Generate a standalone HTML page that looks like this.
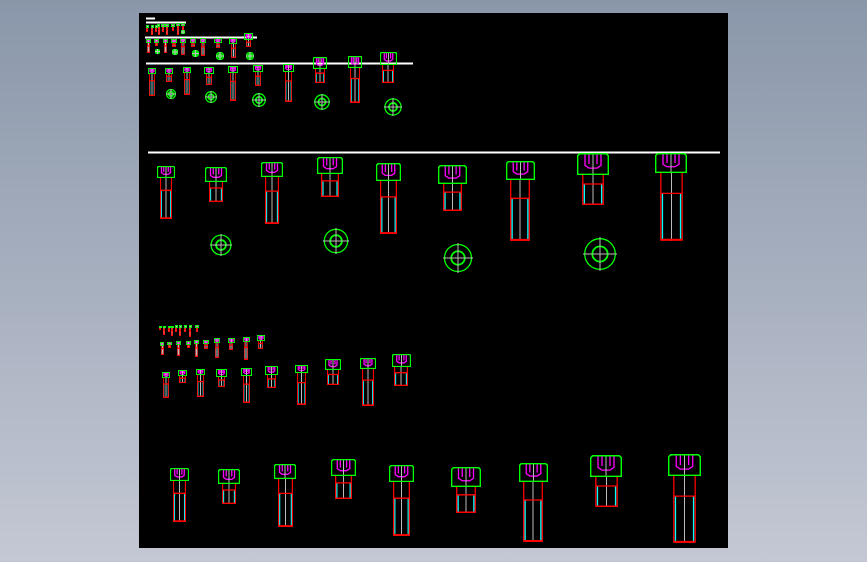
<!DOCTYPE html>
<html><head><meta charset="utf-8"><style>
html,body{margin:0;padding:0;width:867px;height:562px;overflow:hidden;background:linear-gradient(#8a97aa,#c4c8d4);}
svg{position:absolute;left:0;top:0}
</style></head><body>
<svg width="867" height="562" viewBox="0 0 867 562" xmlns="http://www.w3.org/2000/svg">
<defs>
<symbol id="h" viewBox="0 0 24 16" preserveAspectRatio="none">
<path d="M6,0V9L9,11H15L18,9V0M9,0V8M15,0V8" fill="none" stroke="#f0f" stroke-width="1.3" vector-effect="non-scaling-stroke"/>
<path d="M12,0V16" stroke="#bbb" stroke-width="1" vector-effect="non-scaling-stroke"/>
<path d="M0.5,15.5V2L2,0.5H22L23.5,2V15.5Z" fill="none" stroke="#0f0" stroke-width="1.5" vector-effect="non-scaling-stroke"/>
</symbol>
<symbol id="s" viewBox="0 0 14 40" preserveAspectRatio="none">
<path d="M1.5,12V39.5M12.5,12V39.5" stroke="#0ff" stroke-width="1.3" vector-effect="non-scaling-stroke"/>
<path d="M7,0V40" stroke="#bbb" stroke-width="1" vector-effect="non-scaling-stroke"/>
<path d="M0.5,0V39.5H13.5V0M0.5,12H13.5" fill="none" stroke="#f00" stroke-width="1.3" vector-effect="non-scaling-stroke"/>
<path d="M1,39.3H13" stroke="#f00" stroke-width="2" vector-effect="non-scaling-stroke"/>
</symbol>
<symbol id="c" viewBox="-10 -10 20 20">
<circle r="9" fill="none" stroke="#0f0" stroke-width="1.3" vector-effect="non-scaling-stroke"/>
<circle r="4.5" fill="none" stroke="#0f0" stroke-width="1.8" vector-effect="non-scaling-stroke"/>
<path d="M-10,0H10M0,-10V10" stroke="#bbb" stroke-width="1" vector-effect="non-scaling-stroke"/>
</symbol>
</defs>
<rect x="139" y="13" width="589" height="535" fill="#000"/>
<g stroke="#fff" stroke-width="1.6" shape-rendering="crispEdges">
<path d="M146,18.5H155M146,22.5H186M145,37.5H257M146,63.5H413M148,152.5H720"/>
</g>
<use href="#h" x="157" y="166" width="18" height="12"/><use href="#s" x="160" y="178" width="12" height="41"/>
<use href="#h" x="205" y="167" width="22" height="15"/><use href="#s" x="209" y="182" width="14" height="20"/>
<use href="#h" x="261" y="162" width="22" height="15"/><use href="#s" x="265" y="177" width="14" height="47"/>
<use href="#h" x="317" y="157" width="26" height="17"/><use href="#s" x="321" y="174" width="18" height="23"/>
<use href="#h" x="376" y="163" width="25" height="18"/><use href="#s" x="380" y="181" width="17" height="53"/>
<use href="#h" x="438" y="165" width="29" height="19"/><use href="#s" x="443" y="184" width="19" height="27"/>
<use href="#h" x="506" y="161" width="29" height="19"/><use href="#s" x="510" y="180" width="20" height="61"/>
<use href="#h" x="577" y="153" width="32" height="22"/><use href="#s" x="582" y="175" width="22" height="30"/>
<use href="#h" x="655" y="153" width="32" height="20"/><use href="#s" x="660" y="173" width="23" height="68"/>
<use href="#c" x="210" y="234" width="22" height="22"/>
<use href="#c" x="323" y="228" width="26" height="26"/>
<use href="#c" x="443" y="243" width="30" height="30"/>
<use href="#c" x="583" y="237" width="34" height="34"/>
<use href="#h" x="148" y="68" width="8" height="6"/><use href="#s" x="149" y="74" width="6" height="22"/>
<use href="#h" x="165" y="68" width="8" height="6"/><use href="#s" x="166" y="74" width="6" height="8"/>
<use href="#h" x="183" y="67" width="8" height="6"/><use href="#s" x="184" y="73" width="6" height="22"/>
<use href="#h" x="204" y="67" width="10" height="7"/><use href="#s" x="206" y="74" width="6" height="11"/>
<use href="#h" x="228" y="66" width="10" height="7"/><use href="#s" x="230" y="73" width="6" height="28"/>
<use href="#h" x="253" y="65" width="10" height="7"/><use href="#s" x="255" y="72" width="6" height="14"/>
<use href="#h" x="283" y="64" width="11" height="8"/><use href="#s" x="285" y="72" width="7" height="30"/>
<use href="#h" x="313" y="57" width="14" height="12"/><use href="#s" x="315" y="69" width="10" height="14"/>
<use href="#h" x="348" y="56" width="14" height="12"/><use href="#s" x="350" y="68" width="10" height="35"/>
<use href="#h" x="380" y="52" width="17" height="13"/><use href="#s" x="382" y="65" width="12" height="18"/>
<use href="#c" x="166" y="89" width="10" height="10"/>
<use href="#c" x="205" y="91" width="12" height="12"/>
<use href="#c" x="252" y="93" width="14" height="14"/>
<use href="#c" x="314" y="94" width="16" height="16"/>
<use href="#c" x="384" y="98" width="18" height="18"/>
<use href="#h" x="146" y="39" width="5" height="4"/><use href="#s" x="147" y="43" width="3" height="10"/>
<use href="#h" x="154" y="39" width="5" height="4"/><use href="#s" x="155" y="43" width="3" height="3"/>
<use href="#h" x="163" y="39" width="5" height="4"/><use href="#s" x="164" y="43" width="3" height="10"/>
<use href="#h" x="171" y="39" width="6" height="4"/><use href="#s" x="172" y="43" width="4" height="4"/>
<use href="#h" x="180" y="38" width="6" height="5"/><use href="#s" x="181" y="43" width="4" height="12"/>
<use href="#h" x="190" y="38" width="6" height="5"/><use href="#s" x="191" y="43" width="4" height="4"/>
<use href="#h" x="200" y="38" width="6" height="5"/><use href="#s" x="201" y="43" width="4" height="13"/>
<use href="#h" x="214" y="38" width="8" height="5"/><use href="#s" x="216" y="43" width="4" height="5"/>
<use href="#h" x="229" y="38" width="8" height="6"/><use href="#s" x="231" y="44" width="5" height="14"/>
<use href="#h" x="244" y="33" width="9" height="7"/><use href="#s" x="246" y="40" width="5" height="7"/>
<use href="#c" x="155" y="49" width="5" height="5"/>
<use href="#c" x="172" y="49" width="6" height="6"/>
<use href="#c" x="192" y="50" width="7" height="7"/>
<use href="#c" x="216" y="52" width="8" height="8"/>
<use href="#c" x="246" y="52" width="8" height="8"/>
<use href="#h" x="146" y="25" width="3" height="3"/><use href="#s" x="146" y="28" width="2" height="4"/>
<use href="#h" x="151" y="25" width="3" height="3"/><use href="#s" x="151" y="28" width="2" height="7"/>
<use href="#h" x="155" y="25" width="3" height="3"/><use href="#s" x="155" y="28" width="2" height="4"/>
<use href="#h" x="157" y="24" width="3" height="3"/><use href="#s" x="158" y="27" width="2" height="8"/>
<use href="#h" x="161" y="24" width="4" height="3"/><use href="#s" x="162" y="27" width="2" height="5"/>
<use href="#h" x="165" y="24" width="4" height="3"/><use href="#s" x="166" y="27" width="2" height="8"/>
<use href="#h" x="171" y="24" width="4" height="3"/><use href="#s" x="172" y="27" width="2" height="4"/>
<use href="#h" x="176" y="23" width="4" height="3"/><use href="#s" x="177" y="26" width="2" height="9"/>
<use href="#h" x="181" y="23" width="4" height="3"/><use href="#s" x="182" y="26" width="2" height="4"/>
<use href="#c" x="181" y="30" width="4" height="4"/>
<use href="#h" x="159" y="326" width="3" height="2"/><use href="#s" x="159" y="328" width="2" height="2"/>
<use href="#h" x="163" y="326" width="3" height="2"/><use href="#s" x="163" y="328" width="2" height="7"/>
<use href="#h" x="168" y="326" width="3" height="2"/><use href="#s" x="168" y="328" width="2" height="4"/>
<use href="#h" x="171" y="326" width="3" height="2"/><use href="#s" x="171" y="328" width="2" height="8"/>
<use href="#h" x="175" y="325" width="3" height="3"/><use href="#s" x="175" y="328" width="2" height="4"/>
<use href="#h" x="179" y="325" width="3" height="3"/><use href="#s" x="179" y="328" width="2" height="8"/>
<use href="#h" x="184" y="325" width="3" height="3"/><use href="#s" x="184" y="328" width="2" height="4"/>
<use href="#h" x="189" y="325" width="3" height="3"/><use href="#s" x="189" y="328" width="2" height="9"/>
<use href="#h" x="195" y="325" width="4" height="3"/><use href="#s" x="196" y="328" width="2" height="4"/>
<use href="#h" x="160" y="342" width="4" height="4"/><use href="#s" x="161" y="346" width="3" height="9"/>
<use href="#h" x="167" y="342" width="5" height="3"/><use href="#s" x="168" y="345" width="3" height="3"/>
<use href="#h" x="176" y="341" width="5" height="4"/><use href="#s" x="177" y="345" width="3" height="11"/>
<use href="#h" x="186" y="341" width="5" height="4"/><use href="#s" x="187" y="345" width="3" height="3"/>
<use href="#h" x="194" y="340" width="5" height="4"/><use href="#s" x="195" y="344" width="3" height="13"/>
<use href="#h" x="203" y="340" width="6" height="4"/><use href="#s" x="204" y="344" width="4" height="5"/>
<use href="#h" x="214" y="338" width="6" height="5"/><use href="#s" x="215" y="343" width="4" height="15"/>
<use href="#h" x="228" y="338" width="7" height="5"/><use href="#s" x="229" y="343" width="4" height="7"/>
<use href="#h" x="243" y="337" width="7" height="5"/><use href="#s" x="244" y="342" width="4" height="18"/>
<use href="#h" x="257" y="335" width="8" height="6"/><use href="#s" x="258" y="341" width="5" height="8"/>
<use href="#h" x="162" y="372" width="8" height="6"/><use href="#s" x="163" y="378" width="6" height="20"/>
<use href="#h" x="178" y="370" width="9" height="6"/><use href="#s" x="179" y="376" width="7" height="7"/>
<use href="#h" x="196" y="369" width="9" height="6"/><use href="#s" x="197" y="375" width="7" height="22"/>
<use href="#h" x="216" y="369" width="11" height="8"/><use href="#s" x="218" y="377" width="7" height="10"/>
<use href="#h" x="241" y="368" width="11" height="8"/><use href="#s" x="243" y="376" width="7" height="27"/>
<use href="#h" x="265" y="366" width="13" height="9"/><use href="#s" x="267" y="375" width="9" height="13"/>
<use href="#h" x="295" y="365" width="13" height="8"/><use href="#s" x="297" y="373" width="9" height="32"/>
<use href="#h" x="325" y="359" width="16" height="11"/><use href="#s" x="327" y="370" width="12" height="15"/>
<use href="#h" x="360" y="358" width="16" height="11"/><use href="#s" x="362" y="369" width="12" height="37"/>
<use href="#h" x="392" y="354" width="19" height="13"/><use href="#s" x="394" y="367" width="14" height="19"/>
<use href="#h" x="170" y="468" width="19" height="13"/><use href="#s" x="173" y="481" width="13" height="41"/>
<use href="#h" x="218" y="469" width="22" height="15"/><use href="#s" x="222" y="484" width="14" height="20"/>
<use href="#h" x="274" y="464" width="22" height="15"/><use href="#s" x="278" y="479" width="15" height="48"/>
<use href="#h" x="331" y="459" width="25" height="17"/><use href="#s" x="335" y="476" width="17" height="23"/>
<use href="#h" x="389" y="465" width="25" height="17"/><use href="#s" x="393" y="482" width="17" height="54"/>
<use href="#h" x="451" y="467" width="30" height="20"/><use href="#s" x="456" y="487" width="20" height="26"/>
<use href="#h" x="519" y="463" width="29" height="19"/><use href="#s" x="523" y="482" width="20" height="60"/>
<use href="#h" x="590" y="455" width="32" height="22"/><use href="#s" x="595" y="477" width="23" height="30"/>
<use href="#h" x="668" y="454" width="33" height="22"/><use href="#s" x="673" y="476" width="23" height="67"/>
</svg>
</body></html>
